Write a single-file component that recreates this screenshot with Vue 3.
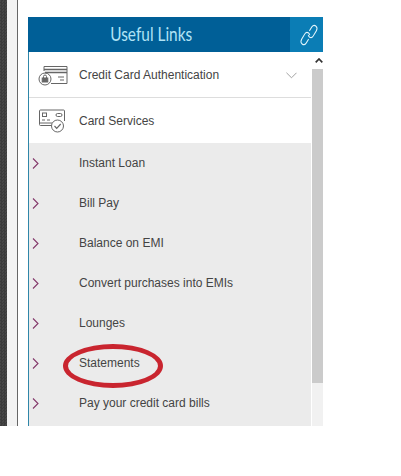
<script setup>
const links = [
  'Instant Loan',
  'Bill Pay',
  'Balance on EMI',
  'Convert purchases into EMIs',
  'Lounges',
  'Statements',
  'Pay your credit card bills'
]
</script>

<template>
  <div class="page">
    <div class="frame">
      <div class="dark"></div>
      <div class="gutter"></div>
      <div class="canvas">
        <section class="panel">
          <header class="head">
            <div class="titlewrap"><h2 class="title">Useful Links</h2></div>
            <div class="linkbox">
              <svg width="20" height="24" viewBox="0 0 26 26" preserveAspectRatio="none" fill="none" stroke="#e4f5fb" stroke-width="1.3">
                <path d="M13.5 8.5l3.2-4.2c1.5-1.9 3.6-2.2 5.2-1 1.7 1.2 1.9 3.3.6 5.2l-4 5.6c-1.3 1.8-3.4 2.2-5 1.1-1-.7-1.4-1.6-1.5-2.5" />
                <path d="M12.5 17.5l-3.2 4.2c-1.5 1.9-3.6 2.2-5.2 1-1.7-1.2-1.9-3.3-.6-5.2l4-5.6c1.3-1.8 3.4-2.2 5-1.1 1 .7 1.4 1.6 1.5 2.5" />
              </svg>
            </div>
          </header>
          <div class="body">
            <div class="content">
              <div class="row first">
                <svg class="icon" width="30" height="22" viewBox="0 0 30 22" fill="none" stroke="#666" stroke-width="1">
                  <path d="M6 7V2.5h23v17H13" />
                  <path d="M6 5.5h23M7 8.5h22" stroke-width="1.3" />
                  <path d="M20 13h6M22 16h4" />
                  <circle cx="7" cy="15" r="6" />
                  <rect x="4.2" y="14" width="5.6" height="4" fill="#666" />
                  <path d="M5.5 14v-1.5a1.5 1.5 0 0 1 3 0V14" />
                </svg>
                <span class="label">Credit Card Authentication</span>
                <svg class="chev" width="11" height="7" viewBox="0 0 12 7" fill="none" stroke="#999" stroke-width="1">
                  <path d="M.5.5 6 6l5.5-5.5" />
                </svg>
              </div>
              <div class="row second">
                <svg class="icon" width="30" height="24" viewBox="0 0 30 24" fill="none" stroke="#666" stroke-width="1">
                  <path d="M15 16.5H2.5q-1 0-1-1V2q0-1 1-1h23q1 0 1 1v10" />
                  <rect x="4.5" y="4" width="4" height="3.5" />
                  <rect x="18" y="4.5" width="6" height="3" rx="1.5" />
                  <path d="M4 11h3M9 11h3M2 14h12" />
                  <circle cx="19.5" cy="17" r="6" fill="#fff" />
                  <path d="m16.5 17 2.2 2.3 4-4.3" stroke-width="1.2" />
                </svg>
                <span class="label">Card Services</span>
              </div>
              <ul class="list">
                <li v-for="item in links" :key="item" class="item">
                  <svg class="arrow" width="7" height="11" viewBox="0 0 7 11" fill="none" stroke="#84386a" stroke-width="1.1">
                    <path d="m1 .5 5 5-5 5" />
                  </svg>
                  <span class="label">{{ item }}</span>
                </li>
              </ul>
              <div class="ring" aria-hidden="true"></div>
            </div>
            <div class="scroll">
              <div class="up">
                <svg width="8" height="5" viewBox="0 0 8 5" fill="none" stroke="#333" stroke-width="1.7">
                  <path d="m.7 4.3 3.3-3.3 3.3 3.3" />
                </svg>
              </div>
              <div class="thumb"></div>
            </div>
          </div>
        </section>
      </div>
    </div>
  </div>
</template>

<style scoped>
.page { width: 401px; height: 476px; background: #fff; overflow: hidden; }
.frame { display: flex; height: 426px; }
.dark { width: 7px; background: repeating-conic-gradient(#3b3b3b 0 25%, #474747 0 50%) 0 0 / 3px 3px; }
.gutter { width: 11px; background: #f2f2f2; border-right: 1px solid #666; box-sizing: border-box; }
.canvas { padding: 17px 0 0 10px; flex: none; }
.panel { width: 295px; height: 409px; display: flex; flex-direction: column; overflow: hidden; }
.head { height: 35px; background: #005f97; display: flex; flex: none; }
.titlewrap { flex: 1; display: flex; justify-content: center; padding-right: 16px; }
.title {
  margin: 0; white-space: nowrap; transform: scaleX(.77);
  font: 400 20px/33px Lato, sans-serif; color: #b0e3f5;
}
.linkbox { width: 33px; background: #0b7db5; display: flex; align-items: center; justify-content: center; padding-left: 5px; box-sizing: border-box; }
.body { flex: 1; display: flex; min-height: 0; }
.content { position: relative; width: 283px; border-left: 1px solid #2f86a8; box-sizing: border-box; margin-right: 1px; }
.row { display: flex; align-items: center; background: #fff; position: relative; }
.first { height: 46px; border-bottom: 1px solid #ddd; box-sizing: border-box; }
.second { height: 45px; }
.icon { position: absolute; left: 9px; top: 50%; transform: translateY(-50%); }
.label {
  margin-left: 50px;
  font: 12px/16px "Liberation Sans", Arial, sans-serif; color: #444;
}
.chev { position: absolute; right: 14px; top: 20px; }
.list { list-style: none; margin: 0; padding: 0; background: #ebebeb; height: 300px; }
.item { height: 40px; display: flex; align-items: center; position: relative; }
.arrow { position: absolute; left: 3px; top: 15px; }
.ring {
  position: absolute; left: 34px; top: 292px; width: 100px; height: 44px;
  border: 5px solid #c9252f; border-radius: 50%; box-sizing: border-box;
}
.scroll { width: 11px; background: #f1f1f1; }
.up { height: 17px; display: flex; align-items: center; justify-content: flex-end; background: #fff; }
.thumb { height: 314px; background: #cbcbcb; }
</style>
